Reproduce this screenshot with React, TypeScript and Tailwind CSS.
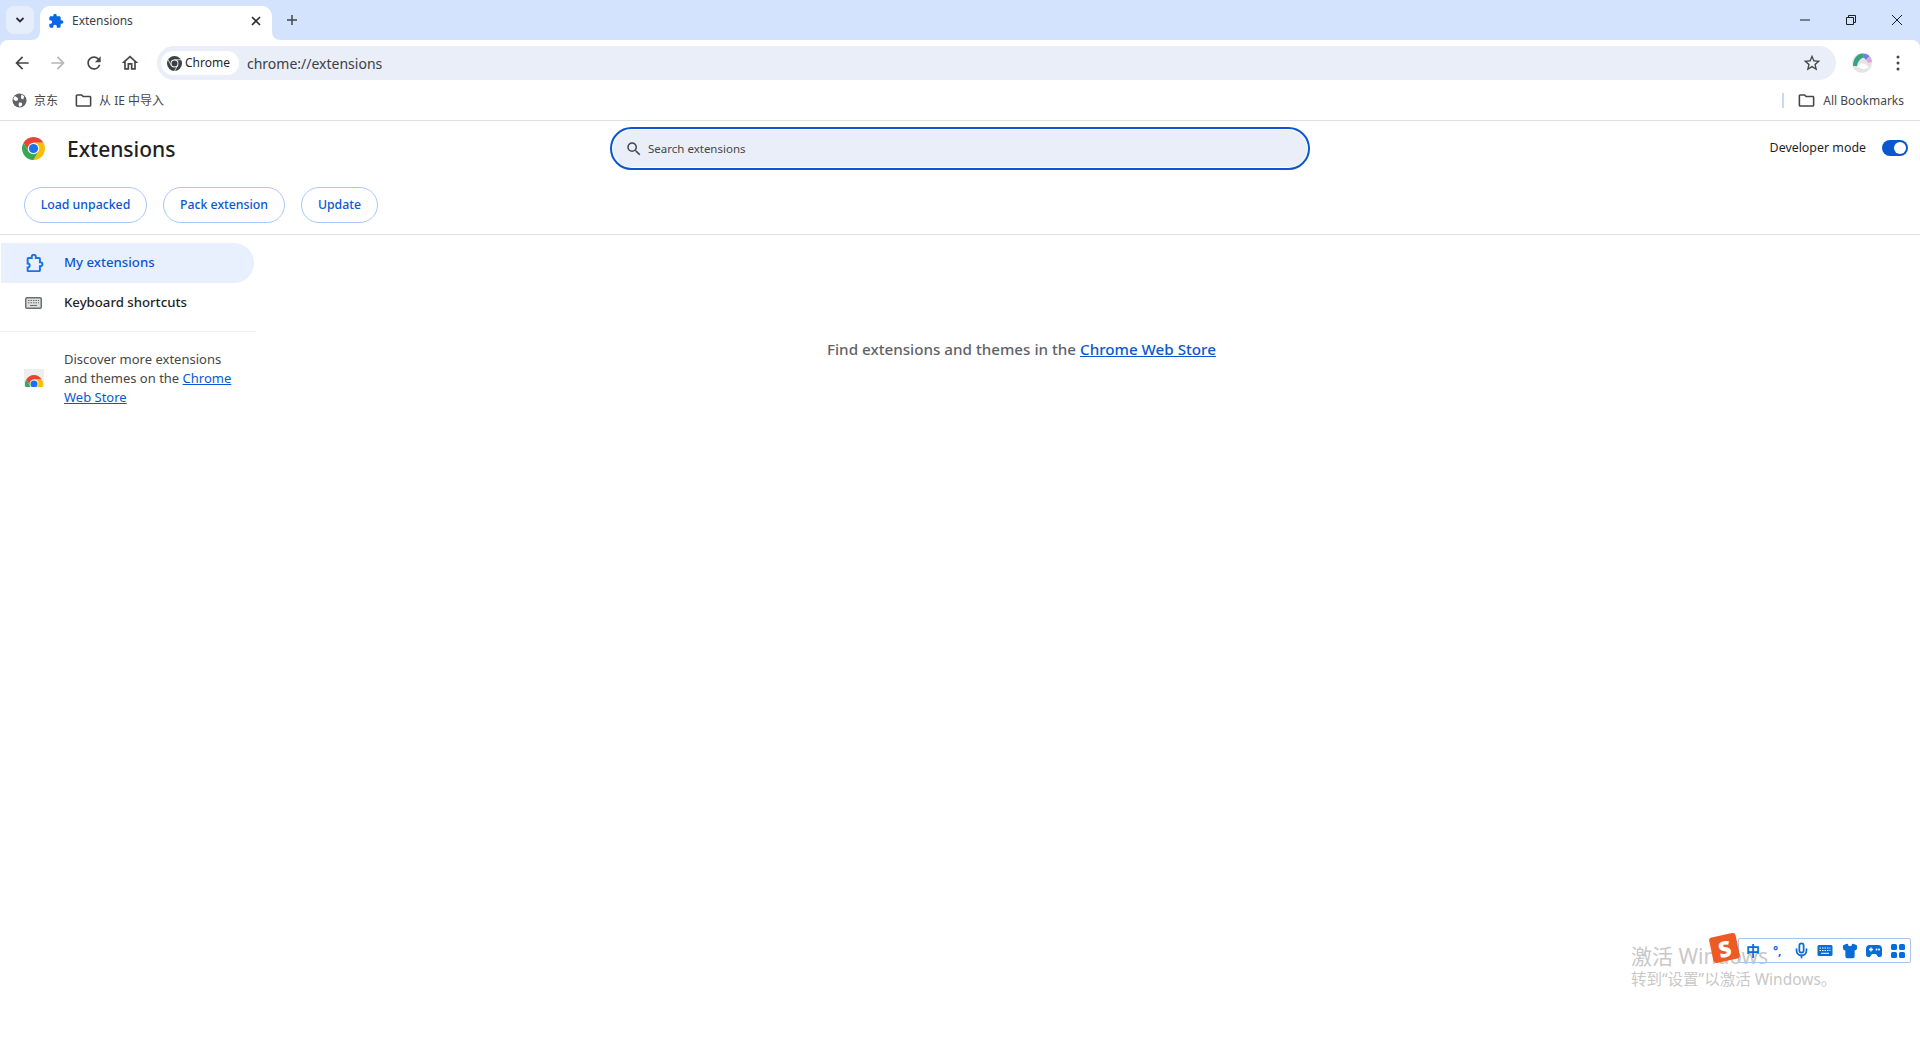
import React from 'react';
import { Mic, Shirt } from 'lucide-react';

const PATHS = {
  back: 'M20 11H7.83l5.59-5.59L12 4l-8 8 8 8 1.41-1.41L7.83 13H20v-2z',
  forward: 'M12 4l-1.41 1.41L16.17 11H4v2h12.17l-5.58 5.59L12 20l8-8z',
  reload: 'M17.65 6.35A7.958 7.958 0 0 0 12 4c-4.42 0-7.99 3.58-7.99 8s3.57 8 7.99 8c3.73 0 6.84-2.55 7.73-6h-2.08A5.99 5.99 0 0 1 12 18c-3.31 0-6-2.69-6-6s2.69-6 6-6c1.66 0 3.14.69 4.22 1.78L13 11h7V4l-2.35 2.35z',
  home: 'M12 5.69l5 4.5V18h-2v-6H9v6H7v-7.81l5-4.5M12 3L2 12h3v8h6v-6h2v6h6v-8h3L12 3z',
  star: 'M22 9.24l-7.19-.62L12 2 9.19 8.63 2 9.24l5.46 4.73L5.82 21 12 17.27 18.18 21l-1.63-7.03L22 9.24zM12 15.4l-3.76 2.27 1-4.28-3.32-2.88 4.38-.38L12 6.1l1.71 4.04 4.38.38-3.32 2.88 1 4.28L12 15.4z',
  search: 'M15.5 14h-.79l-.28-.27A6.471 6.471 0 0 0 16 9.5 6.5 6.5 0 1 0 9.5 16c1.61 0 3.09-.59 4.23-1.57l.27.28v.79l5 4.99L20.49 19l-4.99-5zm-6 0C7.01 14 5 11.99 5 9.5S7.01 5 9.5 5 14 7.01 14 9.5 11.99 14 9.5 14z',
  folder: 'M20 6h-8l-2-2H4c-1.1 0-2 .9-2 2v12c0 1.1.9 2 2 2h16c1.1 0 2-.9 2-2V8c0-1.1-.9-2-2-2zm0 12H4V6h5.17l2 2H20v10z',
  extension: 'M20.5 11H19V7c0-1.1-.9-2-2-2h-4V3.5C13 2.12 11.88 1 10.5 1S8 2.12 8 3.5V5H4c-1.1 0-1.99.9-1.99 2v3.8H3.5c1.49 0 2.7 1.21 2.7 2.7s-1.21 2.7-2.7 2.7H2V20c0 1.1.9 2 2 2h3.8v-1.5c0-1.49 1.21-2.7 2.7-2.7 1.49 0 2.7 1.21 2.7 2.7V22H17c1.1 0 2-.9 2-2v-4h1.5c1.38 0 2.5-1.12 2.5-2.5S21.88 11 20.5 11z',
  // puzzle outline with the small tab on top and the bump on the right
  extensionOutline: 'M9 3.500a2.500 2.500 0 0 1 5 0V5h4a1 1 0 0 1 1 1v4h.5a2.500 2.500 0 0 1 0 5H19v5a1 1 0 0 1-1 1H5a1 1 0 0 1-1-1v-3.500a2.500 2.500 0 0 0 0-5V6a1 1 0 0 1 1-1h4z',
};

const Icon = ({ d, className }: { d: string; className: string }) => (
  <svg viewBox="0 0 24 24" fill="currentColor" className={className}>
    <path d={d} />
  </svg>
);

const ChromeLogo = ({ className }: { className: string }) => (
  <svg viewBox="4 4 40 40" className={className}>
    <path d="M6.68 14A20 20 0 0 1 41.32 14H24L15.34 29Z" fill="#ea4335" />
    <path d="M41.32 14A20 20 0 0 1 24 44L32.66 29L24 14Z" fill="#fbbc04" />
    <path d="M24 44A20 20 0 0 1 6.68 14L15.34 29L32.66 29Z" fill="#34a853" />
    <circle cx="24" cy="24" r="10" fill="#fff" />
    <circle cx="24" cy="24" r="8" fill="#1a73e8" />
  </svg>
);

const ChromeMono = ({ className }: { className: string }) => (
  <svg viewBox="4 4 40 40" className={className} fill="#3c4043">
    <circle cx="24" cy="24" r="20" />
    <path d="M24 14H41.5M15.34 29L6.7 14M32.66 29L24 44" stroke="#fff" strokeWidth="2" />
    <circle cx="24" cy="24" r="10.5" fill="#fff" />
    <circle cx="24" cy="24" r="8" />
  </svg>
);

const Globe = () => (
  <svg viewBox="0 0 16 16" className="h-[15px] w-[15px]">
    <circle cx="8" cy="8" r="7.5" fill="#5f6368" />
    <path d="M3 3.2L6.5 5.5 6 8 3.5 8.5 1.2 6.5zM7.5 10l3 .5.3 2.5-2.8 2-1-2.5zM10 1.5l3 2-1 3.5-2.5-1.5z" fill="#fff" />
  </svg>
);

const Avatar = () => (
  <svg viewBox="4 4 20 20" className="h-5 w-5">
    <circle cx="14" cy="14" r="10" fill="#e4e4e4" />
    <path d="M5 17C5 9 10 4.5 15 4.500l1 4c-3 .5-6 3-7 8.500z" fill="#35a383" />
    <path d="M15 4.500c3 0 5 1 6.500 2.500L18 11c-1-1.500-2-2.500-2.500-2.500z" fill="#6f7fe0" />
    <path d="M21.500 7c1.500 1.500 2.500 3.500 2.500 6l-4 1c-.3-1.500-1-2.500-2-3z" fill="#d9a7d8" />
    <path d="M9 18l4-4 5 1.500 3 3.500-6 1z" fill="#fff" />
  </svg>
);

const KeyboardGlyph = () => (
  <svg viewBox="0 0 17 12" className="h-3 w-[17px]">
    <rect width="17" height="12" rx="2" fill="#6b6f73" />
    <rect x="1.500" y="1.500" width="14" height="9" rx="0.500" fill="#dedede" />
    <path d="M3 3.500h11M3 5.800h11" stroke="#6b6f73" strokeWidth="1" strokeDasharray="1.500 1" />
    <path d="M5 8.500h7" stroke="#6b6f73" strokeWidth="1" />
  </svg>
);

const TabFlare = ({ side }: { side: 'left' | 'right' }) => (
  <svg
    viewBox="0 0 8 8"
    className={`absolute bottom-0 h-2 w-2 ${side === 'left' ? '-left-2' : '-right-2'}`}
  >
    <path d={side === 'left' ? 'M8 0V8H0A8 8 0 0 0 8 0z' : 'M0 0V8H8A8 8 0 0 1 0 0z'} fill="#fff" />
  </svg>
);

const OutlineButton = ({ label, className }: { label: string; className: string }) => (
  <button className={`h-9 rounded-full border border-[#a8c7fa] text-[12.3px] font-medium text-[#0b57d0] ${className}`}>
    {label}
  </button>
);

export default function App() {
  return (
    <div className="relative h-[1040px] w-[1920px] overflow-hidden bg-white font-['Noto_Sans','Noto_Sans_CJK_SC',sans-serif] text-[#1f1f1f]">
      {/* tab strip */}
      <div className="flex h-10 items-end bg-[#d3e3fd]">
        <div className="mb-[6px] ml-[6px] flex h-7 w-7 items-center justify-center rounded-lg bg-[#e6eefc]">
          <svg viewBox="0 0 12 12" className="h-3 w-3 text-[#2b2f33]">
            <path d="M2.500 4L6 7.500 9.500 4" fill="none" stroke="currentColor" strokeWidth="1.800" />
          </svg>
        </div>
        <div className="relative ml-[6px] flex h-[34px] w-[232px] items-center rounded-t-[10px] bg-white pb-[5px] pl-2 pr-[10px]">
          <TabFlare side="left" />
          <Icon d={PATHS.extension} className="h-4 w-4 text-[#0b66e4]" />
          <span className="ml-[8px] flex-1 text-xs text-[#3c4043]">Extensions</span>
          <svg viewBox="0 0 12 12" className="h-3 w-3 text-[#2b2f33]">
            <path d="M2 2l8 8M10 2l-8 8" stroke="currentColor" strokeWidth="1.600" />
          </svg>
          <TabFlare side="right" />
        </div>
        <div className="mb-[6px] ml-[6px] flex h-7 w-7 items-center justify-center">
          <svg viewBox="0 0 12 12" className="h-3 w-3 text-[#444746]">
            <path d="M6 1v10M1 6h10" stroke="currentColor" strokeWidth="1.500" />
          </svg>
        </div>
        <div className="flex-1" />
        <div className="flex h-10 items-center text-[#1f1f1f]">
          <div className="flex h-10 w-[46px] items-center justify-center">
            <svg viewBox="0 0 10 10" className="h-[10px] w-[10px]">
              <path d="M0 5h10" stroke="currentColor" strokeWidth="1" />
            </svg>
          </div>
          <div className="flex h-10 w-[46px] items-center justify-center">
            <svg viewBox="0 0 10 10" className="h-[10px] w-[10px]">
              <path d="M.5 2.500h7v7h-7zM2.500 2.500V.5h7v7h-2" fill="none" stroke="currentColor" strokeWidth="1" />
            </svg>
          </div>
          <div className="flex h-10 w-[46px] items-center justify-center">
            <svg viewBox="0 0 10 10" className="h-[10px] w-[10px]">
              <path d="M0 0l10 10M10 0L0 10" stroke="currentColor" strokeWidth="1" />
            </svg>
          </div>
        </div>
      </div>

      {/* toolbar */}
      <div className="bg-[#d3e3fd]">
        <div className="flex h-[46px] items-center rounded-t-lg bg-white px-3">
          <Icon d={PATHS.back} className="h-5 w-5 text-[#444746]" />
          <Icon d={PATHS.forward} className="ml-4 h-5 w-5 text-[#b4b6b8]" />
          <Icon d={PATHS.reload} className="ml-4 h-5 w-5 text-[#444746]" />
          <Icon d={PATHS.home} className="ml-4 h-5 w-5 text-[#444746]" />
          <div className="ml-[17px] flex h-[34px] w-[1679px] items-center rounded-full bg-[#e9eef8] pl-1 pr-[14px]">
            <div className="flex h-6 w-[78px] items-center rounded-full bg-white pl-[6px]">
              <ChromeMono className="h-[15px] w-[15px]" />
              <span className="ml-[3px] text-xs text-[#1f1f1f]">Chrome</span>
            </div>
            <span className="ml-2 flex-1 text-[14px] text-[#3c4043]">chrome://extensions</span>
            <Icon d={PATHS.star} className="h-5 w-5 text-[#444746]" />
          </div>
          <div className="ml-4 flex w-5 items-center justify-center">
            <Avatar />
          </div>
          <svg viewBox="0 0 4 16" className="ml-[24px] h-4 w-1 text-[#444746]">
            <circle cx="2" cy="2" r="1.500" fill="currentColor" />
            <circle cx="2" cy="8" r="1.500" fill="currentColor" />
            <circle cx="2" cy="14" r="1.500" fill="currentColor" />
          </svg>
        </div>
      </div>

      {/* bookmarks bar */}
      <div className="flex h-[35px] items-center border-b border-[#e0e0e0] pb-[5px] pl-3 pr-[16px] text-xs text-[#474747]">
        <Globe />
        <span className="ml-[7px]">京东</span>
        <Icon d={PATHS.folder} className="ml-[16px] h-[19px] w-[19px] text-[#444746]" />
        <span className="ml-[6px]">从 IE 中导入</span>
        <div className="flex-1" />
        <div className="h-[15px] w-[2px] bg-[#c5d9f5]" />
        <Icon d={PATHS.folder} className="ml-[13px] h-[19px] w-[19px] text-[#444746]" />
        <span className="ml-[7px]">All Bookmarks</span>
      </div>

      {/* extensions page header */}
      <div className="h-[114px] border-b border-[#e0e0e0]">
        <div className="flex h-[55px] items-center">
          <div className="flex w-[610px] items-center pl-[22px]">
            <ChromeLogo className="h-[23px] w-[23px]" />
            <span className="ml-[22px] pt-[3px] text-[21px] font-medium text-[#1f1f1f]">Extensions</span>
          </div>
          <div className="flex h-[43px] w-[700px] items-center rounded-full border-2 border-[#0b57d0] bg-[#e9eef8] pl-[13px] ring-1 ring-inset ring-white">
            <Icon d={PATHS.search} className="h-[18px] w-[18px] text-[#444746]" />
            <span className="ml-[5px] text-[11.5px] text-[#444746]">Search extensions</span>
          </div>
          <div className="flex flex-1 items-center justify-end pr-3">
            <span className="text-[12.4px] text-[#1f1f1f]">Developer mode</span>
            <div className="ml-4 flex h-4 w-[26px] items-center justify-end rounded-full bg-[#0b57d0] pr-[2px]">
              <div className="h-3 w-3 rounded-full bg-white" />
            </div>
          </div>
        </div>
        <div className="mt-[11px] flex pl-6">
          <OutlineButton label="Load unpacked" className="w-[123px]" />
          <OutlineButton label="Pack extension" className="ml-4 w-[122px]" />
          <OutlineButton label="Update" className="ml-4 w-[77px]" />
        </div>
      </div>

      <div className="flex">
        {/* side navigation */}
        <div className="w-[256px] pt-2">
          <div className="ml-px flex h-10 w-[253px] items-center rounded-r-full bg-[#e8effd] pl-[25px] text-[#0b57d0]">
            <svg viewBox="2 0 22 22" className="h-[18px] w-[18px]" fill="none" stroke="#1a73e8" strokeWidth="2.400">
              <path d={PATHS.extensionOutline} />
            </svg>
            <span className="ml-[20px] text-[13.2px] font-medium">My extensions</span>
          </div>
          <div className="flex h-10 items-center pl-[25px]">
            <KeyboardGlyph />
            <span className="ml-[22px] text-[13.2px] font-medium text-[#1f1f1f]">Keyboard shortcuts</span>
          </div>
          <div className="mt-2 h-px w-[256px] bg-[#eeeeee]" />
          <div className="mt-[18px] flex items-center pl-6">
            <div className="relative mb-[2px] h-[18px] w-5 overflow-hidden bg-[#eeeeee]">
              <ChromeLogo className="absolute left-[1px] top-[6px] h-[18px] w-[18px]" />
            </div>
            <p className="ml-5 w-[180px] text-[13px] leading-[19px] text-[#474747]">
              Discover more extensions and themes on the{' '}
              <span className="text-[#0b57d0] underline">Chrome Web Store</span>
            </p>
          </div>
        </div>
        {/* empty state */}
        <div className="flex-1 pl-[571px] pt-[103px] text-[15.2px] font-medium text-[#5f6368]">
          Find extensions and themes in the <span className="text-[#0b57d0] underline">Chrome Web Store</span>
        </div>
      </div>

      {/* activation notice */}
      <div className="absolute left-[1631px] top-[942px] text-[#c8c8c8]">
        <div className="text-[21px] leading-[28px]">激活 Windows</div>
        <div className="text-[15.5px] leading-[18px]">转到“设置”以激活 Windows。</div>
      </div>

      {/* input method bar */}
      <div className="absolute left-[1738px] top-[938px] flex h-[25px] w-[173px] items-center rounded-[2px] border border-[#a8c4ea] pl-[2px] text-[#0a6cd6]">
        <span className="w-[24.4px] text-center text-[14px] font-bold leading-none">中</span>
        <span className="w-[24.4px] text-center text-[12px] font-bold leading-none">°,</span>
        <div className="flex w-[24.4px] justify-center">
          <Mic className="h-[17px] w-[17px]" strokeWidth={2.500} />
        </div>
        <div className="flex w-[24.4px] justify-center">
          <svg viewBox="0 0 16 12" className="h-[13px] w-[16px]">
            <rect x="0.500" y="0.500" width="15" height="11" rx="1.500" fill="currentColor" />
            <path d="M2.500 3.500h11M2.500 6h11" stroke="#fff" strokeWidth="1" strokeDasharray="1.500 1" />
            <path d="M4 8.800h8" stroke="#fff" strokeWidth="1" />
          </svg>
        </div>
        <div className="flex w-[24.4px] justify-center">
          <Shirt className="h-4 w-4" fill="currentColor" />
        </div>
        <div className="flex w-[24.4px] justify-center">
          <svg viewBox="0 0 16 14" className="h-[14px] w-4" fill="currentColor">
            <path d="M4 1h8a4 4 0 0 1 4 4v5.500a2.500 2.500 0 0 1-4.600 1.400L10 10H6l-1.400 1.900A2.500 2.500 0 0 1 0 10.500V5a4 4 0 0 1 4-4z" />
            <path d="M3 5.500h4M5 3.500v4" stroke="#fff" strokeWidth="1.300" />
            <circle cx="10.500" cy="5.500" r="1" fill="#fff" />
            <circle cx="13" cy="5.500" r="1" fill="#fff" />
          </svg>
        </div>
        <div className="flex w-[24.4px] justify-center">
          <svg viewBox="0 0 14 14" className="h-[14px] w-[14px]" fill="currentColor">
            <rect x="0" y="0" width="6" height="6" rx="1.500" />
            <rect x="8" y="0" width="6" height="6" rx="1.500" />
            <rect x="0" y="8" width="6" height="6" rx="1.500" />
            <rect x="8" y="8" width="6" height="6" rx="1.500" />
          </svg>
        </div>
      </div>
      <div className="absolute left-[1711px] top-[935px] flex h-[26px] w-[27px] -rotate-[12deg] items-center justify-center rounded-[3px] bg-[#ee5a24] text-[22px] font-black leading-none text-white">
        S
      </div>
    </div>
  );
}
